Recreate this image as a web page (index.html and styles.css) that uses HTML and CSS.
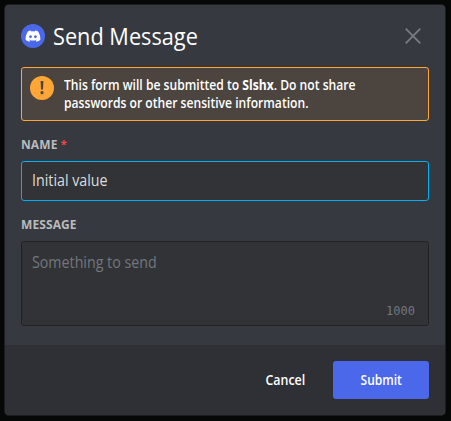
FILE: index.html
```html
<!DOCTYPE html>
<html lang="en">
<head>
<meta charset="utf-8">
<title>Send Message</title>
<link rel="stylesheet" href="styles.css">
</head>
<body>
<form class="modal">
  <div class="content">
    <header class="header">
      <svg class="logo" viewBox="0 0 24 24"><circle cx="12" cy="12" r="12" fill="#4b68eb"/><g transform="translate(4.6 6.6) scale(.116)"><path fill="#fff" d="M107.7 8.07A105.15 105.15 0 0 0 81.47 0a72.06 72.06 0 0 0-3.36 6.83 97.68 97.68 0 0 0-29.11 0A72.37 72.37 0 0 0 45.64 0a105.89 105.89 0 0 0-26.25 8.09C2.79 32.65-1.71 56.6.54 80.21a105.73 105.73 0 0 0 32.17 16.15 77.7 77.7 0 0 0 6.89-11.11 68.42 68.42 0 0 1-10.85-5.18c.91-.66 1.8-1.34 2.66-2a75.57 75.57 0 0 0 64.32 0c.87.71 1.76 1.39 2.66 2a68.68 68.68 0 0 1-10.87 5.19 77 77 0 0 0 6.89 11.1 105.25 105.25 0 0 0 32.19-16.14c2.64-27.38-4.51-51.11-18.9-72.15ZM42.45 65.69C36.18 65.69 31 60 31 53s5-12.74 11.43-12.74S54 46 53.89 53s-5.05 12.69-11.44 12.69Zm42.24 0C78.41 65.69 73.25 60 73.25 53s5-12.74 11.44-12.74S96.23 46 96.12 53s-5.04 12.69-11.43 12.69Z"/></g></svg>
      <h1 class="title">Send Message</h1>
      <svg class="close" viewBox="0 0 16 16"><path d="M.7.7 15.3 15.3M15.3.7.7 15.3" stroke="#777a7f" stroke-width="1.9"/></svg>
    </header>
    <div class="notice">
      <svg class="warn" viewBox="0 0 24 24"><circle cx="12" cy="12" r="12" fill="#ffa636"/><path d="M10.6 5h2.8l-.4 8.4h-2z" fill="#4c443e"/><circle cx="12" cy="16.7" r="1.6" fill="#4c443e"/></svg>
      <p class="notice-text">This form will be submitted to <strong>Slshx</strong>. Do not share<br>passwords or other sensitive information.</p>
    </div>
    <label class="label">NAME <span class="required">*</span></label>
    <div class="field focused"><span class="value">Initial value</span></div>
    <label class="label">MESSAGE</label>
    <div class="field area"><span class="value">Something to send</span><span class="count">1000</span></div>
  </div>
  <footer class="footer">
    <span class="cancel">Cancel</span>
    <span class="submit"><span class="submit-text">Submit</span></span>
  </footer>
</form>
</body>
</html>
```
FILE: styles.css
```css
* { box-sizing: border-box; }
body {
  margin: 0;
  padding: 5px 6px 6px 5px;
  height: 421px;
  background: #060807;
  font-family: "Open Sans", "Noto Sans", sans-serif;
  color: #fff;
}
.modal {
  display: flex;
  flex-direction: column;
  height: 410px;
  border-radius: 4px;
  background: #36393f;
  box-shadow: 0 0 0 1px #1b1d1f;
  overflow: hidden;
}
.content { height: 340px; padding: 16px; background: #363940; }
.header { display: flex; align-items: center; height: 30px; margin-bottom: 16px; }
.logo { width: 24px; height: 24px; }
.title {
  flex: 1;
  margin: 0 0 0 8px;
  font-size: 24px;
  line-height: 30px;
  font-weight: 400;
  white-space: nowrap;
  transform: scaleX(.905);
  transform-origin: left;
}
.close { width: 16px; height: 16px; margin-right: 8px; }
.notice {
  display: flex;
  height: 54px;
  padding: 8px;
  border: 1px solid #ffa636;
  border-radius: 3px;
  background: #4c443e;
}
.warn { flex: none; width: 24px; height: 24px; }
.notice-text {
  margin: 0 0 0 10px;
  font-size: 13.5px;
  line-height: 18px;
  font-weight: 600;
  white-space: nowrap;
  transform: scaleX(.898);
  transform-origin: left;
}
.notice-text strong { font-weight: 700; }
.label {
  display: block;
  height: 16px;
  margin: 16px 0 8px;
  font-size: 12px;
  line-height: 16px;
  font-weight: 700;
  letter-spacing: .1px;
  color: #b9bbbe;
}
.required { color: #f04747; font-size: 11px; vertical-align: 1px; line-height: 1; }
.field {
  display: flex;
  height: 40px;
  padding: 0 10px;
  border: 1px solid #202225;
  border-radius: 3px;
  background: #323337;
  font-size: 16px;
  line-height: 37px;
}
.value { transform: scaleX(.89); transform-origin: left; }
.focused { border-color: #00aff4; color: #dcddde; }
.area {
  height: 85px;
  padding: 9px 13px 4px 10px;
  line-height: 22px;
  color: #72767d;
  justify-content: space-between;
}
.count { align-self: flex-end; font: 12px/20px "DejaVu Sans Mono", monospace; }
.footer {
  display: flex;
  align-items: center;
  justify-content: flex-end;
  height: 70px;
  padding: 0 16px;
  background: #2f3035;
  font-size: 13.5px;
  font-weight: 600;
}
.cancel { margin-right: 28px; transform: scaleX(.92); transform-origin: right; }
.submit {
  width: 96px;
  height: 38px;
  border-radius: 3px;
  background: #4b68eb;
  line-height: 38px;
  text-align: center;
}
.submit-text { display: inline-block; transform: scaleX(.89); }
```
